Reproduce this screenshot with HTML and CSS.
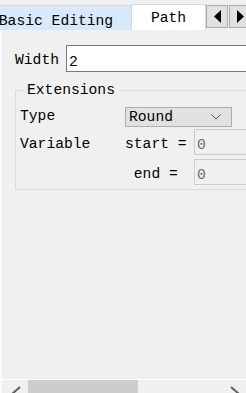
FILE: index.html
```html
<!DOCTYPE html>
<html>
<head>
    <meta charset="UTF-8">
    <title>Path</title>
    <link rel="stylesheet" href="styles.css">
</head>
<body>
    <!-- Pestañas -->
    <div class="tabbar">
        <div class="tab">Basic Editing</div>
        <div class="tab tab-activa">Path</div>
        <button class="flecha">
            <svg width="7" height="13" viewBox="0 0 7 13"><polygon points="7,0 0,6.5 7,13" fill="#000"/></svg>
        </button>
        <button class="flecha flecha-der">
            <svg width="7" height="13" viewBox="0 0 7 13"><polygon points="0,0 7,6.5 0,13" fill="#000"/></svg>
        </button>
    </div>

    <div class="panel">
        <div class="contenido">
            <div class="fila-ancho">
                <span class="etiqueta">Width</span>
                <input class="campo" type="text" value="2">
            </div>

            <fieldset class="grupo">
                <legend>Extensions</legend>
                <div class="rejilla">
                    <span class="etiqueta-tipo">Type</span>
                    <div class="combo">
                        <span>Round</span>
                        <svg width="10" height="6" viewBox="0 0 10 6"><polyline points="0.5,0.5 5,5 9.5,0.5" fill="none" stroke="#555" stroke-width="1"/></svg>
                    </div>

                    <span class="etiqueta">Variable</span>
                    <span class="etiqueta">start =</span>
                    <input class="campo campo-off" type="text" value="0" disabled>

                    <span></span>
                    <span class="etiqueta"> end =</span>
                    <input class="campo campo-off" type="text" value="0" disabled>
                </div>
            </fieldset>
        </div>

        <!-- Barra de desplazamiento horizontal -->
        <div class="hscroll">
            <svg class="hs-flecha" width="10" height="12" viewBox="0 0 10 12"><polyline points="9,1 1,8" fill="none" stroke="#606060" stroke-width="2"/></svg>
            <div class="hs-pulgar"></div>
            <svg class="hs-flecha hs-der" width="10" height="12" viewBox="0 0 10 12"><polyline points="1,1 9,8" fill="none" stroke="#606060" stroke-width="2"/></svg>
        </div>
    </div>
</body>
</html>
```
FILE: styles.css
```css
body {
    margin: 0;
    width: 246px;
    height: 393px;
    overflow: hidden;
    background-color: #f0f0f0;
    font-family: "Liberation Mono", "Courier New", monospace;
    font-size: 14.67px;
    line-height: 17px;
    color: #000;
}

.tabbar {
    height: 30px;
    box-sizing: border-box;
    padding-top: 4px;
    display: flex;
    align-items: flex-end;
    white-space: pre;
}

.tab {
    width: 150px;
    height: 25px;
    box-sizing: border-box;
    margin-left: -19px;
    padding-top: 7px;
    text-align: center;
    background-color: #d8eaf9;
    border-top: 1px solid #d9d9d9;
    flex-shrink: 0;
}

.tab-activa {
    width: 75px;
    height: 26px;
    margin-left: 0;
    padding-top: 5px;
    background-color: #fff;
    border: 1px solid #d9d9d9;
    border-bottom: none;
}

.flecha {
    width: 22px;
    height: 23px;
    margin: 0 0 2px 0;
    padding: 0;
    align-self: flex-start;
    margin-top: 1px;
    background-color: #e1e1e1;
    border: 1px solid #adadad;
    display: flex;
    align-items: center;
    justify-content: center;
    flex-shrink: 0;
}

.flecha-der {
    margin-left: 1px;
}

.panel {
    height: 363px;
    border-left: 2px solid #fafafa;
    display: flex;
    flex-direction: column;
    overflow: hidden;
}

.contenido {
    flex: 1;
    width: 330px;
    padding: 15px 0 0 13px;
    box-sizing: border-box;
}

.fila-ancho {
    display: flex;
    align-items: flex-start;
    gap: 7px;
}

.etiqueta {
    padding-top: 7px;
    white-space: pre;
}

.campo {
    width: 260px;
    height: 27px;
    box-sizing: border-box;
    margin: 0;
    padding: 6px 0 0 2px;
    font: inherit;
    line-height: 17px;
    color: #000;
    background-color: #fff;
    border: 1px solid #7a7a7a;
    outline: none;
}

.grupo {
    margin: 10px 0 0 0;
    padding: 8px 0 4px 4px;
    border: 1px solid #dcdcdc;
    min-width: 0;
}

.grupo legend {
    margin-left: 3px;
    padding: 0 4px;
    line-height: 17px;
}

.rejilla {
    display: grid;
    grid-template-columns: 105px 69px 1fr;
    row-gap: 4px;
}

.etiqueta-tipo {
    padding-top: 1px;
}

.combo {
    grid-column: 2 / 4;
    width: 107px;
    height: 20px;
    box-sizing: border-box;
    padding: 0 0 0 3px;
    margin-bottom: -2px;
    background-color: #e1e1e1;
    border: 1px solid #adadad;
    display: flex;
    align-items: center;
    justify-content: space-between;
}

.combo svg {
    margin-right: 10px;
}

.campo-off {
    height: 26px;
    color: #6d6d6d;
    background-color: #f0f0f0;
    border-color: #cccccc;
}

.hscroll {
    height: 13px;
    border-top: 1px solid #fff;
    display: flex;
    align-items: flex-start;
    flex-shrink: 0;
}

.hs-flecha {
    margin: 6px 0 0 9px;
}

.hs-pulgar {
    width: 110px;
    height: 13px;
    margin-left: 7px;
    background-color: #cdcdcd;
}

.hs-der {
    margin-left: 92px;
}
```
